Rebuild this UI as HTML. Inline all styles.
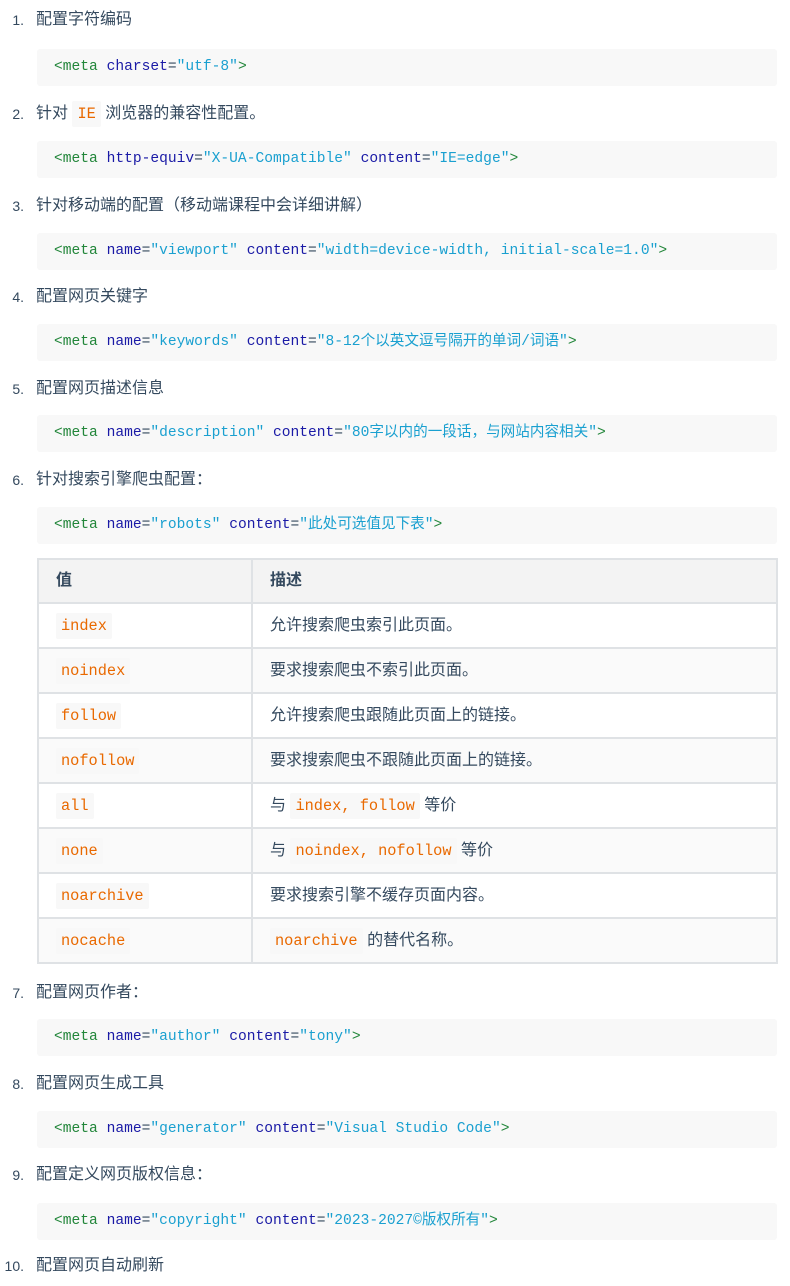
<!DOCTYPE html>
<html><head><meta charset="utf-8"><style>
body{margin:0;background:#fff;width:790px;height:1286px;position:relative;overflow:hidden;font-family:"Liberation Sans","Noto Sans CJK SC",sans-serif;color:#34495e;font-size:16px}
.li{position:absolute;left:0;height:26px;line-height:26px;white-space:nowrap}
.li .n{position:absolute;left:0;width:24px;text-align:right;font-size:14px}
.li .t{position:absolute;left:36px}
.code{position:absolute;left:37px;width:740px;height:37px;background:#f8f8f8;border-radius:3px;font-family:"Liberation Mono","Noto Sans CJK SC",monospace;font-size:14.6px;line-height:37px;padding-left:17px;box-sizing:border-box;white-space:pre}
.g{color:#22863a}.a{color:#1a1aa6}.v{color:#1aa0d0}.p{color:#34495e}
code{font-family:"Liberation Mono","Noto Sans CJK SC",monospace;color:#e96900;background:#f8f8f8;font-size:15.3px;padding:4px 5px;border-radius:2px}
table{position:absolute;left:37px;top:558px;width:741px;border-collapse:collapse}
td,th{border:2px solid #dfe2e5;padding:0 17px;text-align:left;font-size:16px;line-height:20px}
tr{height:45px}
tr:first-child{height:44px}
th{background:#f3f3f3;font-weight:bold}
td:first-child,th:first-child{width:178px}
tr:nth-child(odd) td{background:#fafafa}
</style></head><body>
<div class="li" style="top:7px"><span class="n">1.</span><span class="t">配置字符编码</span></div>
<div class="code" style="top:49px"><span class="g">&lt;meta</span> <span class="a">charset</span><span class="p">=</span><span class="v">"utf-8"</span><span class="g">&gt;</span></div>
<div class="li" style="top:101px"><span class="n">2.</span><span class="t">针对 <code>IE</code> 浏览器的兼容性配置。</span></div>
<div class="code" style="top:141px"><span class="g">&lt;meta</span> <span class="a">http-equiv</span><span class="p">=</span><span class="v">"X-UA-Compatible"</span> <span class="a">content</span><span class="p">=</span><span class="v">"IE=edge"</span><span class="g">&gt;</span></div>
<div class="li" style="top:193px"><span class="n">3.</span><span class="t">针对移动端的配置（移动端课程中会详细讲解）</span></div>
<div class="code" style="top:233px"><span class="g">&lt;meta</span> <span class="a">name</span><span class="p">=</span><span class="v">"viewport"</span> <span class="a">content</span><span class="p">=</span><span class="v">"width=device-width, initial-scale=1.0"</span><span class="g">&gt;</span></div>
<div class="li" style="top:284px"><span class="n">4.</span><span class="t">配置网页关键字</span></div>
<div class="code" style="top:324px"><span class="g">&lt;meta</span> <span class="a">name</span><span class="p">=</span><span class="v">"keywords"</span> <span class="a">content</span><span class="p">=</span><span class="v">"8-12个以英文逗号隔开的单词/词语"</span><span class="g">&gt;</span></div>
<div class="li" style="top:376px"><span class="n">5.</span><span class="t">配置网页描述信息</span></div>
<div class="code" style="top:415px"><span class="g">&lt;meta</span> <span class="a">name</span><span class="p">=</span><span class="v">"description"</span> <span class="a">content</span><span class="p">=</span><span class="v">"80字以内的一段话，与网站内容相关"</span><span class="g">&gt;</span></div>
<div class="li" style="top:467px"><span class="n">6.</span><span class="t">针对搜索引擎爬虫配置：</span></div>
<div class="code" style="top:507px"><span class="g">&lt;meta</span> <span class="a">name</span><span class="p">=</span><span class="v">"robots"</span> <span class="a">content</span><span class="p">=</span><span class="v">"此处可选值见下表"</span><span class="g">&gt;</span></div>
<table>
<tr><th>值</th><th>描述</th></tr>
<tr><td><code>index</code></td><td>允许搜索爬虫索引此页面。</td></tr>
<tr><td><code>noindex</code></td><td>要求搜索爬虫不索引此页面。</td></tr>
<tr><td><code>follow</code></td><td>允许搜索爬虫跟随此页面上的链接。</td></tr>
<tr><td><code>nofollow</code></td><td>要求搜索爬虫不跟随此页面上的链接。</td></tr>
<tr><td><code>all</code></td><td>与 <code>index, follow</code> 等价</td></tr>
<tr><td><code>none</code></td><td>与 <code>noindex, nofollow</code> 等价</td></tr>
<tr><td><code>noarchive</code></td><td>要求搜索引擎不缓存页面内容。</td></tr>
<tr><td><code>nocache</code></td><td><code>noarchive</code> 的替代名称。</td></tr>
</table>
<div class="li" style="top:980px"><span class="n">7.</span><span class="t">配置网页作者：</span></div>
<div class="code" style="top:1019px"><span class="g">&lt;meta</span> <span class="a">name</span><span class="p">=</span><span class="v">"author"</span> <span class="a">content</span><span class="p">=</span><span class="v">"tony"</span><span class="g">&gt;</span></div>
<div class="li" style="top:1071px"><span class="n">8.</span><span class="t">配置网页生成工具</span></div>
<div class="code" style="top:1111px"><span class="g">&lt;meta</span> <span class="a">name</span><span class="p">=</span><span class="v">"generator"</span> <span class="a">content</span><span class="p">=</span><span class="v">"Visual Studio Code"</span><span class="g">&gt;</span></div>
<div class="li" style="top:1162px"><span class="n">9.</span><span class="t">配置定义网页版权信息：</span></div>
<div class="code" style="top:1203px"><span class="g">&lt;meta</span> <span class="a">name</span><span class="p">=</span><span class="v">"copyright"</span> <span class="a">content</span><span class="p">=</span><span class="v">"2023-2027©版权所有"</span><span class="g">&gt;</span></div>
<div class="li" style="top:1253px"><span class="n">10.</span><span class="t">配置网页自动刷新</span></div>
</body></html>
